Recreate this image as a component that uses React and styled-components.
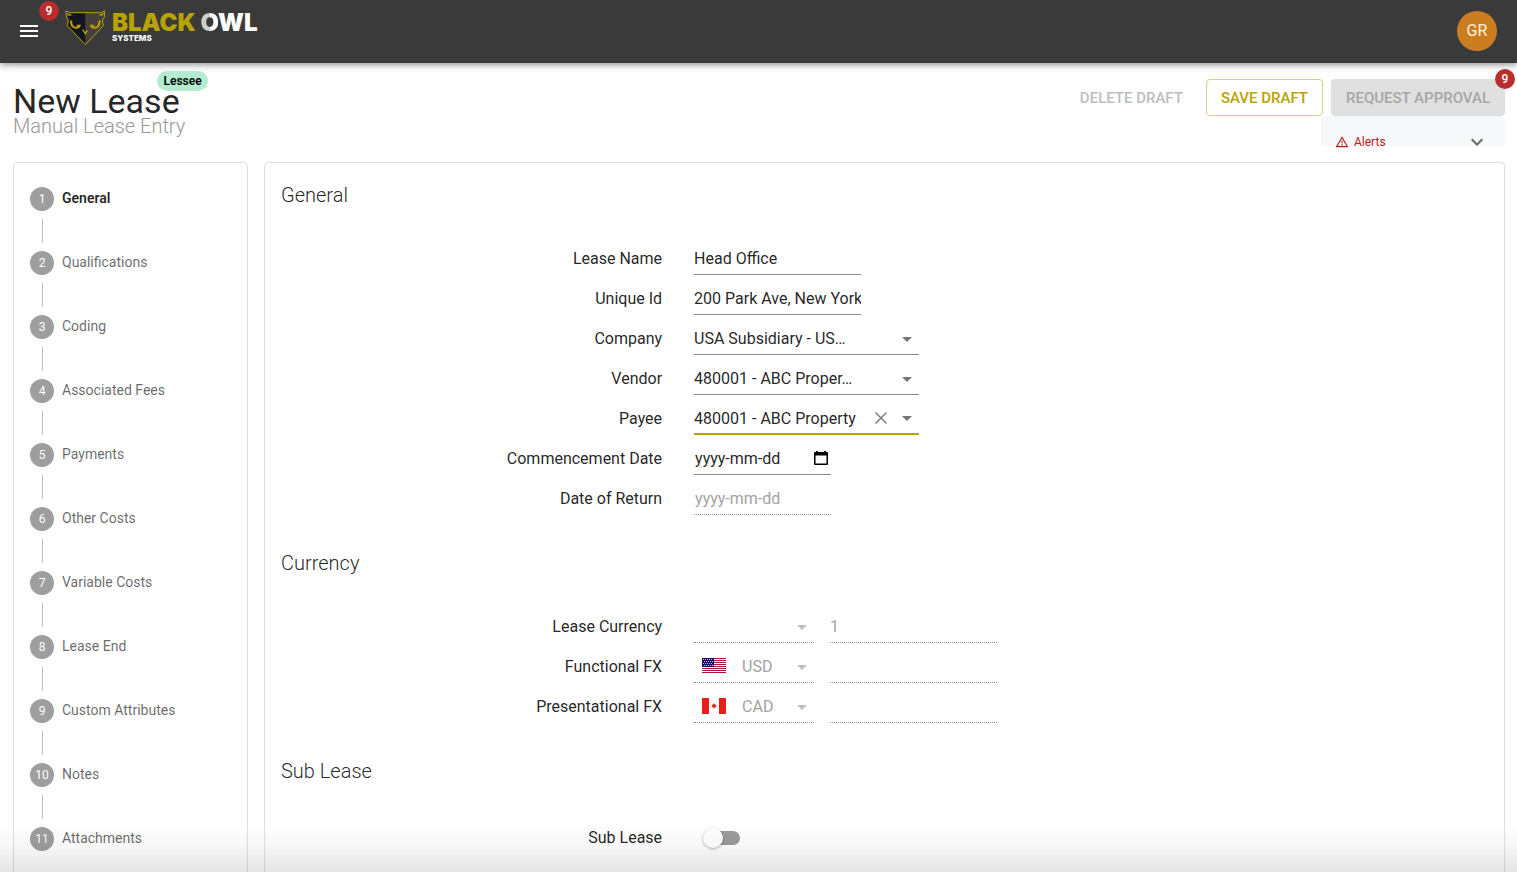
import React, { useState } from 'react';
import styled, { createGlobalStyle } from 'styled-components';

const steps = [
  'General',
  'Qualifications',
  'Coding',
  'Associated Fees',
  'Payments',
  'Other Costs',
  'Variable Costs',
  'Lease End',
  'Custom Attributes',
  'Notes',
  'Attachments',
];

const OwlLogo = () => (
  <svg width="42" height="36" viewBox="0 0 126 108" fill="none" aria-hidden="true">
    <path d="M4 5 L14 8 H61 V104 L8 49 L11 28 Z" fill="#14161f" />
    <path d="M118 5 L108 8 H61 V104 L114 49 L111 28 Z" fill="#45413a" />
    <path
      d="M3 3 L15 8 H107 L119 3 L118 22 L112 30 L115 47 L61 104 L7 47 L10 30 L4 22 Z"
      stroke="#b8a200"
      strokeWidth="3"
      strokeLinejoin="round"
    />
    <path d="M5 8 L23 16 L9 17 Z M117 8 L99 16 L113 17 Z" fill="#b8a200" />
    <g fill="#b8a200">
      <path d="M16 30 C13 42 19 56 33 56 C42 56 47 51 48 44 H35 C37 48 36 50 32 50 C24 50 21 41 22 33 Z" />
      <path d="M106 30 C109 42 103 56 89 56 C80 56 75 51 74 44 H87 C85 48 86 50 90 50 C98 50 101 41 100 33 Z" />
    </g>
    <path d="M53 59 L61 71 L67 61" stroke="#b8a200" strokeWidth="4" />
  </svg>
);

const Caret = ({ disabled }) => (
  <CaretIcon viewBox="0 0 24 24" disabled={disabled} aria-hidden="true">
    <path d="M7 10l5 5 5-5z" />
  </CaretIcon>
);

const UsFlag = () => (
  <svg width="24" height="16" viewBox="0 0 24 16" shapeRendering="crispEdges" aria-hidden="true">
    <rect width="24" height="15" fill="#fff" />
    {[0, 2, 4, 6, 8, 10, 12, 14].map((y) => (
      <rect key={y} y={y} width="24" height="1" fill="#b0123a" />
    ))}
    <rect width="12" height="9" fill="#1d1066" />
    <g fill="#b9b5d6">
      {[1, 3, 5, 7].map((y) =>
        [1, 3, 5, 7, 9].map((x) => (
          <rect key={`${x}-${y}`} x={x + (y % 4 === 3 ? 1 : 0)} y={y} width="1" height="1" />
        ))
      )}
    </g>
  </svg>
);

const CaFlag = () => (
  <svg width="24" height="16" viewBox="0 0 24 16" aria-hidden="true">
    <rect width="24" height="16" fill="#fff" />
    <rect width="7" height="16" fill="#e8201c" />
    <rect x="17" width="7" height="16" fill="#e8201c" />
    <path
      d="M12 5 L12.8 6.4 L13.6 6.2 L13.5 7.2 L14.8 7.8 L13.4 9.4 L12.3 9.6 V11 H11.7 V9.6 L10.6 9.4 L9.2 7.8 L10.5 7.2 L10.4 6.2 L11.2 6.4 Z"
      fill="#e8201c"
    />
  </svg>
);

const Row = ({ id, label, children }) => (
  <FormRow>
    <Label htmlFor={id}>{label}</Label>
    <Fields>{children}</Fields>
  </FormRow>
);

const SelectField = ({ id, value, width, disabled, flag }) => (
  <FieldBox width={width} disabled={disabled}>
    {flag && <FlagSlot>{flag}</FlagSlot>}
    <Select id={id} disabled={disabled} defaultValue={value}>
      <option>{value}</option>
    </Select>
    <Caret disabled={disabled} />
  </FieldBox>
);

const TextField = ({ id, value, label, disabled }) => (
  <FieldBox width={167} disabled={disabled}>
    <Input id={id} defaultValue={value} disabled={disabled} aria-label={label} />
  </FieldBox>
);

export default function App() {
  const [active, setActive] = useState(0);
  const [payee, setPayee] = useState('480001 - ABC Property');

  return (
    <Page>
      <GlobalStyle />
      <AppBar>
        <MenuButton aria-label="Menu">
          <svg width="24" height="24" viewBox="0 0 24 24" fill="#fff">
            <path d="M3 18h18v-2H3v2zm0-5h18v-2H3v2zm0-7v2h18V6H3z" />
          </svg>
          <Badge>9</Badge>
        </MenuButton>
        <Brand href="#">
          <OwlLogo />
          <BrandText>
            <BrandName>
              BLACK <White><SplitLetter>O</SplitLetter>WL</White>
            </BrandName>
            <BrandSub>SYSTEMS</BrandSub>
          </BrandText>
        </Brand>
        <Avatar>GR</Avatar>
      </AppBar>

      <PageHead>
        <TitleBlock>
          <Title>
            New Lease
            <Chip>Lessee</Chip>
          </Title>
          <Subtitle>Manual Lease Entry</Subtitle>
        </TitleBlock>
        <HeadRight>
          <Actions>
            <TextButton disabled>DELETE DRAFT</TextButton>
            <OutlinedButton>SAVE DRAFT</OutlinedButton>
            <ContainedButton disabled>
              REQUEST APPROVAL
              <Badge>9</Badge>
            </ContainedButton>
          </Actions>
          <Alerts>
            <svg width="14" height="14" viewBox="0 0 24 24" fill="#b71c1c">
              <path d="M12 5.99L19.53 19H4.47L12 5.99M12 2L1 21h22L12 2zm1 14h-2v2h2v-2zm0-6h-2v4h2v-4z" />
            </svg>
            <AlertsText>Alerts</AlertsText>
            <svg width="24" height="24" viewBox="0 0 24 24" fill="#666">
              <path d="M16.59 8.59L12 13.17 7.41 8.59 6 10l6 6 6-6z" />
            </svg>
          </Alerts>
        </HeadRight>
      </PageHead>

      <Content>
        <Sidebar>
          {steps.map((step, i) => (
            <Step key={step}>
              <StepButton active={i === active ? 1 : 0} onClick={() => setActive(i)}>
                <StepNumber>{i + 1}</StepNumber>
                {step}
              </StepButton>
            </Step>
          ))}
        </Sidebar>

        <Panel>
          <SectionTitle>General</SectionTitle>
          <Section>
            <Row id="lease-name" label="Lease Name">
              <TextField id="lease-name" value="Head Office" />
            </Row>
            <Row id="unique-id" label="Unique Id">
              <TextField id="unique-id" value="200 Park Ave, New York" />
            </Row>
            <Row id="company" label="Company">
              <SelectField id="company" width={225} value="USA Subsidiary - US…" />
            </Row>
            <Row id="vendor" label="Vendor">
              <SelectField id="vendor" width={225} value="480001 - ABC Proper…" />
            </Row>
            <Row id="payee" label="Payee">
              <FieldBox width={225} focused={1}>
                <Input id="payee" value={payee} onChange={(e) => setPayee(e.target.value)} />
                <IconButton aria-label="Clear" onClick={() => setPayee('')}>
                  <svg width="20" height="20" viewBox="0 0 20 20" stroke="#757575" strokeWidth="1.4">
                    <path d="M4.5 4.5 L15.5 15.5 M15.5 4.5 L4.5 15.5" />
                  </svg>
                </IconButton>
                <IconButton aria-label="Open">
                  <Caret />
                </IconButton>
              </FieldBox>
            </Row>
            <Row id="commencement" label="Commencement Date">
              <FieldBox width={137}>
                <DateInput id="commencement" placeholder="yyyy-mm-dd" />
                <IconButton aria-label="Pick a date">
                  <svg width="20" height="20" viewBox="0 0 20 20">
                    <path
                      d="M5 2h2v1h6V2h2v1h1a1 1 0 0 1 1 1v11a1 1 0 0 1-1 1H4a1 1 0 0 1-1-1V4a1 1 0 0 1 1-1h1zM4.500 6.500V14.500H15.500V6.500z"
                      fillRule="evenodd"
                    />
                  </svg>
                </IconButton>
              </FieldBox>
            </Row>
            <Row id="return-date" label="Date of Return">
              <FieldBox width={137} disabled>
                <DateInput id="return-date" placeholder="yyyy-mm-dd" disabled />
              </FieldBox>
            </Row>
          </Section>

          <SectionTitle>Currency</SectionTitle>
          <Section>
            <Row id="lease-currency" label="Lease Currency">
              <SelectField id="lease-currency" width={120} value="" disabled />
              <TextField value="1" label="Lease currency rate" disabled />
            </Row>
            <Row id="functional-fx" label="Functional FX">
              <SelectField id="functional-fx" width={120} value="USD" flag={<UsFlag />} disabled />
              <TextField value="" label="Functional rate" disabled />
            </Row>
            <Row id="presentational-fx" label="Presentational FX">
              <SelectField id="presentational-fx" width={120} value="CAD" flag={<CaFlag />} disabled />
              <TextField value="" label="Presentational rate" disabled />
            </Row>
          </Section>

          <SectionTitle>Sub Lease</SectionTitle>
          <Section>
            <SwitchRow>
              <Label htmlFor="sub-lease">Sub Lease</Label>
              <Switch id="sub-lease" type="checkbox" />
            </SwitchRow>
          </Section>
        </Panel>
      </Content>
      <BottomFade />
    </Page>
  );
}

const GlobalStyle = createGlobalStyle`
  * {
    box-sizing: border-box;
  }

  body {
    margin: 0;
    background: #fff;
    color: rgba(0, 0, 0, 0.87);
    font-family: Roboto, "Liberation Sans", sans-serif;
    font-size: 16px;
  }

  button, input, select {
    font-family: inherit;
    font-size: inherit;
    color: inherit;
  }

  svg {
    flex-shrink: 0;
  }
`;

const Page = styled.div`
  height: 100vh;
  display: flex;
  flex-direction: column;
  overflow: hidden;
`;

const AppBar = styled.header`
  height: 63px;
  flex-shrink: 0;
  display: flex;
  align-items: center;
  padding: 0 20px 1px 17px;
  background: #3a3a3a;
  box-shadow: 0 2px 4px -1px rgba(0, 0, 0, 0.2), 0 4px 5px rgba(0, 0, 0, 0.14), 0 1px 10px rgba(0, 0, 0, 0.12);
`;

const MenuButton = styled.button`
  position: relative;
  width: 24px;
  height: 24px;
  padding: 0;
  border: none;
  background: none;
  cursor: pointer;

  span {
    top: -18px;
    right: -18px;
  }
`;

const Badge = styled.span`
  position: absolute;
  top: -11px;
  right: -11px;
  width: 20px;
  height: 20px;
  border-radius: 10px;
  background: #b92d2d;
  color: #fff;
  font-size: 12px;
  font-weight: 500;
  line-height: 20px;
  text-align: center;
`;

const Brand = styled.a`
  display: flex;
  align-self: flex-start;
  gap: 5px;
  margin: 10px auto 0 24px;
  text-decoration: none;
`;

const BrandText = styled.div`
  display: flex;
  flex-direction: column;
  padding-top: 2px;
  font-family: Inter, sans-serif;
`;

const BrandName = styled.span`
  color: #b8a200;
  font-size: 24px;
  font-weight: 900;
  line-height: 22px;
`;

const White = styled.span`
  color: #fff;
`;

const SplitLetter = styled.span`
  background: linear-gradient(90deg, #cfcfca 55%, #fff 55%);
  background-clip: text;
  -webkit-text-fill-color: transparent;
`;

const BrandSub = styled.span`
  color: #fff;
  font-size: 8px;
  font-weight: 800;
  line-height: 8px;
`;

const Avatar = styled.div`
  width: 40px;
  height: 40px;
  border-radius: 50%;
  background: #cb7e20;
  color: #fff3e0;
  line-height: 40px;
  text-align: center;
`;

const PageHead = styled.div`
  display: flex;
  justify-content: space-between;
  padding: 16px 12px 16px 13px;
`;

const TitleBlock = styled.div`
  padding-top: 4px;
`;

const Title = styled.h1`
  position: relative;
  width: fit-content;
  margin: 0;
  font-size: 34px;
  font-weight: 400;
  line-height: 36px;
`;

const Chip = styled.span`
  position: absolute;
  top: -12px;
  right: -28px;
  height: 20px;
  padding: 0 6px;
  border-radius: 10px;
  background: #b3eccf;
  color: #000;
  font-size: 12px;
  font-weight: 600;
  line-height: 20px;
`;

const Subtitle = styled.p`
  margin: 0;
  color: #999;
  font-size: 20px;
  font-weight: 300;
  line-height: 14px;
`;

const HeadRight = styled.div`
  display: flex;
  flex-direction: column;
  align-items: flex-end;
`;

const Actions = styled.div`
  display: flex;
  gap: 8px;
`;

const Button = styled.button`
  height: 37px;
  padding: 0 14px;
  border: 1px solid transparent;
  border-radius: 4px;
  background: none;
  font-size: 15px;
  font-weight: 500;
`;

const TextButton = styled(Button)`
  color: #bdbdbd;
`;

const OutlinedButton = styled(Button)`
  border-color: #dcd07f;
  color: #b8a200;
  cursor: pointer;
`;

const ContainedButton = styled(Button)`
  position: relative;
  background: #e0e0e0;
  color: #a6a6a6;
`;

const Alerts = styled.button`
  display: flex;
  align-items: center;
  gap: 5px;
  width: 184px;
  height: 30px;
  padding: 22px 16px 0 14px;
  border: none;
  border-radius: 4px;
  background: #f6f8fa;
  cursor: pointer;
`;

const AlertsText = styled.span`
  flex: 1;
  color: #b71c1c;
  font-size: 12px;
  text-align: left;
`;

const Content = styled.main`
  display: grid;
  grid-template-columns: 235px 1fr;
  gap: 16px;
  padding: 0 12px 0 13px;
`;

const Card = styled.section`
  border: 1px solid #e0e0e0;
  border-radius: 4px;
`;

const Sidebar = styled(Card).attrs({ as: 'nav' })`
  padding: 24px 16px;
`;

const Step = styled.div`
  & + &::before {
    content: '';
    display: block;
    width: 1px;
    height: 24px;
    margin: 8px 0 8px 12px;
    background: #bdbdbd;
  }
`;

const StepButton = styled.button`
  display: flex;
  align-items: flex-start;
  gap: 8px;
  height: 24px;
  padding: 0;
  border: none;
  background: none;
  font-size: 14px;
  font-weight: ${({ active }) => (active ? 600 : 400)};
  line-height: 22px;
  color: ${({ active }) => (active ? 'rgba(0, 0, 0, 0.87)' : 'rgba(0, 0, 0, 0.6)')};
  cursor: pointer;
`;

const StepNumber = styled.span`
  width: 24px;
  height: 24px;
  border-radius: 50%;
  background: #9e9e9e;
  color: #fff;
  font-size: 12px;
  font-weight: 400;
  line-height: 24px;
  text-align: center;
`;

const Panel = styled(Card)`
  padding: 16px;
`;

const SectionTitle = styled.h2`
  margin: 0;
  font-size: 20px;
  font-weight: 300;
  line-height: 32px;
`;

const Section = styled.div`
  padding: 24px 0 32px;
`;

const FormRow = styled.div`
  display: grid;
  grid-template-columns: 12fr 25fr;
  align-items: end;
  gap: 32px;
  height: 40px;
`;

const SwitchRow = styled(FormRow)`
  height: 54px;
  align-items: center;
`;

const Label = styled.label`
  line-height: 32px;
  text-align: right;
`;

const Fields = styled.div`
  display: flex;
  gap: 16px;
`;

const FieldBox = styled.div`
  display: flex;
  align-items: center;
  width: ${({ width }) => width}px;
  height: 32px;
  border-bottom: ${({ focused, disabled }) =>
    focused ? '2px solid #b8a200' : `1px ${disabled ? 'dotted' : 'solid'} #8c8c8c`};
`;

const FlagSlot = styled.span`
  display: flex;
  margin: 0 16px 2px 8px;
`;

const Input = styled.input`
  flex: 1;
  min-width: 0;
  height: 30px;
  padding: 0;
  border: none;
  outline: none;
  background: none;

  &:disabled {
    color: #a3a3a3;
  }
`;

const DateInput = styled(Input)`
  padding-left: 1px;

  &::placeholder {
    color: inherit;
    opacity: 1;
  }
`;

const Select = styled.select`
  flex: 1;
  min-width: 0;
  height: 30px;
  padding: 0;
  border: none;
  outline: none;
  background: none;
  appearance: none;

  &:disabled {
    color: #a3a3a3;
    opacity: 1;
  }
`;

const CaretIcon = styled.svg`
  width: 24px;
  height: 24px;
  fill: ${({ disabled }) => (disabled ? '#bdbdbd' : '#757575')};
  pointer-events: none;
`;

const IconButton = styled.button`
  display: flex;
  padding: 0;
  border: none;
  background: none;
  cursor: pointer;

  & + & {
    margin-left: 4px;
  }
`;

const Switch = styled.input`
  appearance: none;
  position: relative;
  width: 34px;
  height: 14px;
  margin: 0 0 0 12px;
  border-radius: 7px;
  background: #9b9b9b;
  cursor: pointer;

  &::before {
    content: '';
    position: absolute;
    top: -3px;
    left: -3px;
    width: 20px;
    height: 20px;
    border-radius: 50%;
    background: #fff;
    box-shadow: 0 1px 3px rgba(0, 0, 0, 0.3);
  }

  &:checked::before {
    left: 17px;
  }
`;

const BottomFade = styled.div`
  position: fixed;
  right: 0;
  bottom: 0;
  left: 0;
  height: 50px;
  background: linear-gradient(transparent, rgba(0, 0, 0, 0.03) 50%, rgba(0, 0, 0, 0.11));
  pointer-events: none;
`;
